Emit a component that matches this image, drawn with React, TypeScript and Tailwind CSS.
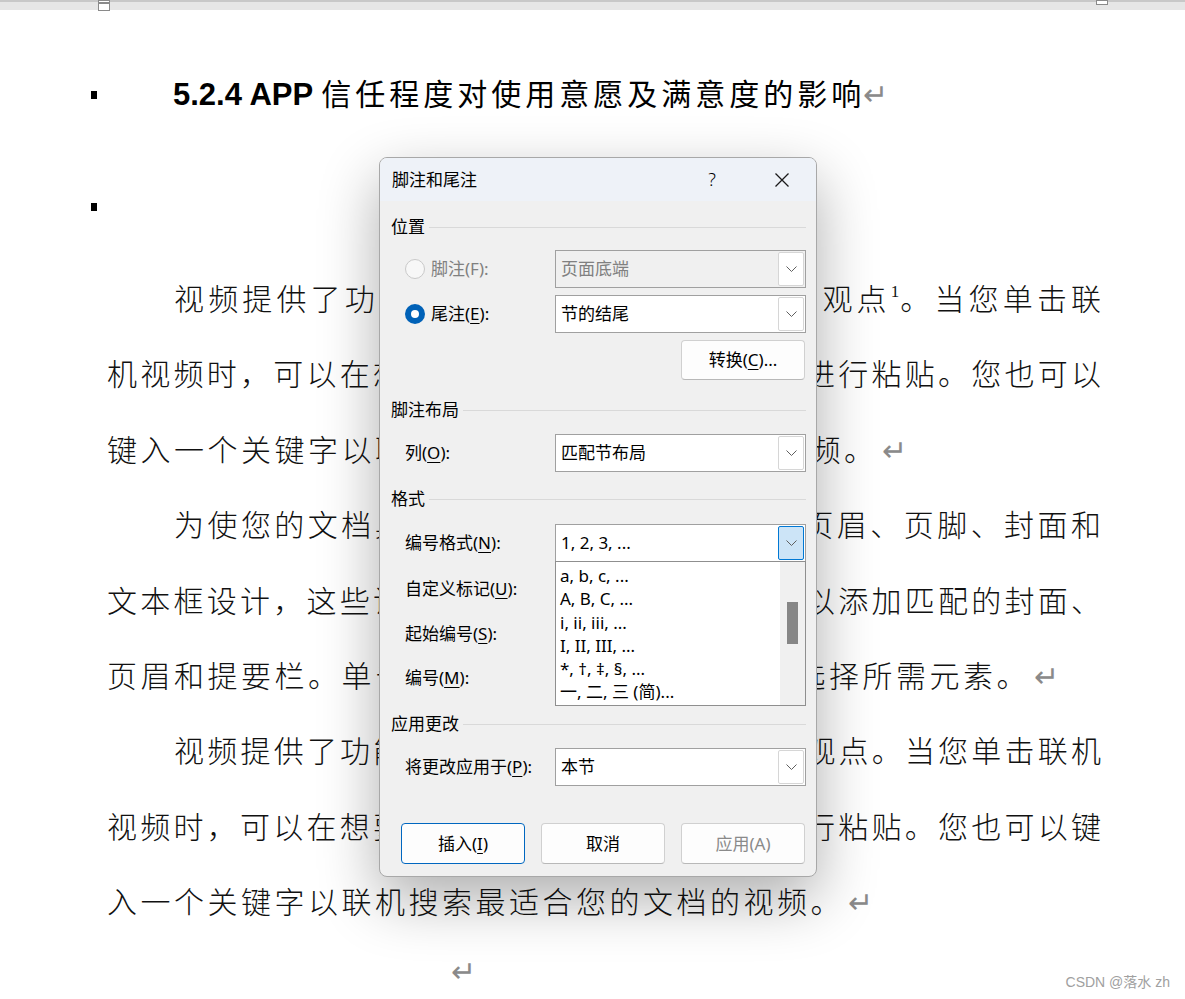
import React from "react";

const RET = ({ className }: { className?: string }) => (
  <span
    className={`inline-block align-baseline text-[#8a8a8a] font-['DejaVu_Sans',sans-serif] font-extralight text-[30px] leading-none tracking-normal ${className ?? "ml-[4px]"}`}
  >
    ↵
  </span>
);

function Line({ children, last, indent }: { children: React.ReactNode; last?: boolean; indent?: boolean }) {
  return (
    <div
      className={`h-[75.4px] leading-[75.4px] whitespace-nowrap overflow-visible ${
        last ? "text-left tracking-[3.5px]" : "text-justify [text-align-last:justify] tracking-[3px]"
      } ${indent ? "pl-[67px]" : ""}`}
    >
      {children}
    </div>
  );
}

function Chevron() {
  return (
    <svg width="11" height="6" viewBox="0 0 11 6">
      <path d="M0.5 0.5 L5.5 5.5 L10.5 0.5" stroke="#5f5f5f" strokeWidth="1" fill="none" />
    </svg>
  );
}

function Select({ value, disabled, active }: { value: string; disabled?: boolean; active?: boolean }) {
  return (
    <div
      className={`flex items-center w-[251px] h-[38px] border border-[#a0a0a0] ${
        disabled ? "bg-[#f0f0f0] text-[#808080]" : "bg-white text-black"
      }`}
    >
      <span className="pl-[5px] flex-1">{value}</span>
      <div
        className={`mr-[1px] w-[26px] h-[34px] flex items-center justify-center rounded-[2px] border ${
          active ? "bg-[#cce4f7] border-[#0078d4]" : "bg-white border-[#d6d6d6]"
        }`}
      >
        <Chevron />
      </div>
    </div>
  );
}

function Section({ title, className }: { title: string; className?: string }) {
  return (
    <div className={`flex items-center h-[20px] ${className ?? ""}`}>
      <span className="leading-[20px]">{title}</span>
      <div className="flex-1 h-px bg-[#d9d9d9] ml-[4px]" />
    </div>
  );
}

function U({ c }: { c: string }) {
  return <span className="underline underline-offset-[3px] decoration-1">{c}</span>;
}

function Btn({ children, primary, disabled }: { children: React.ReactNode; primary?: boolean; disabled?: boolean }) {
  return (
    <div
      className={`w-[124px] h-[41px] rounded-[4px] border flex items-center justify-center bg-[#fdfdfd] ${
        primary ? "border-[#0067c0]" : "border-[#d0d0d0] border-b-[#b8b8b8]"
      } ${disabled ? "text-[#8a8a8a]" : "text-black"}`}
    >
      {children}
    </div>
  );
}

export default function App() {
  return (
    <div className="relative w-[1185px] h-[999px] overflow-hidden bg-white">
      {/* ruler strip */}
      <div className="relative h-[10px] bg-[#e6e6e6] border-t-[2px] border-[#c8c8c8]">
        <div className="absolute left-[98px] top-[-2px] w-[12px] h-[3px] bg-white border border-[#8a8a8a]" />
        <div className="absolute left-[98px] top-[1px] w-[12px] h-[8px] bg-white border border-[#8a8a8a]" />
        <div className="absolute left-[1096px] top-[-2px] w-[12px] h-[5px] bg-white border border-[#8a8a8a]" />
      </div>

      {/* heading */}
      <div className="flex items-center h-[50px] mt-[60px]">
        <div className="ml-[91px] w-[6px] h-[8px] bg-black" />
        <div className="ml-[76px] leading-[50px] text-black whitespace-nowrap">
          <span className="text-[31px] font-bold font-['Liberation_Sans',sans-serif]">5.2.4 APP </span>
          <span className="text-[30px] tracking-[4px] font-normal font-['Noto_Sans_CJK_SC',sans-serif]">信任程度对使用意愿及满意度的影响</span>
          <RET className="-ml-[2px]" />
        </div>
      </div>

      {/* empty bullet heading */}
      <div className="flex items-center h-[50px] mt-[62px]">
        <div className="ml-[91px] w-[6px] h-[8px] bg-black" />
      </div>

      {/* body */}
      <div className="mt-[28px] ml-[107px] w-[997px] text-[30px] text-[#111] font-light font-['Noto_Sans_CJK_SC',sans-serif]">
        <Line indent>
          视频提供了功能强大的方法帮助您证明您的观点<span className="relative top-[-13px] text-[17px] leading-none tracking-normal font-['Liberation_Serif',serif]">1</span>。当您单击联
        </Line>
        <Line>机视频时，可以在想要添加的视频的嵌入代码中进行粘贴。您也可以</Line>
        <Line last>
          键入一个关键字以联机搜索最适合您的文档的视频。
          <RET />
        </Line>
        <Line indent>为使您的文档具有专业外观，Word 提供了页眉、页脚、封面和</Line>
        <Line>文本框设计，这些设计可互为补充。例如，您可以添加匹配的封面、</Line>
        <Line last>
          页眉和提要栏。单击“插入”，然后从不同库中选择所需元素。
          <RET />
        </Line>
        <Line indent>视频提供了功能强大的方法帮助您证明您的观点。当您单击联机</Line>
        <Line>视频时，可以在想要添加的视频的嵌入代码中进行粘贴。您也可以键</Line>
        <Line last>
          入一个关键字以联机搜索最适合您的文档的视频。
          <RET />
        </Line>
        <div className="h-[60px] leading-[60px] pl-[344px]">
          <RET className="ml-0" />
        </div>
      </div>

      {/* dialog */}
      <div className="absolute left-[379px] top-[157px] w-[438px] h-[720px] rounded-[8px] border border-[#a8a8a8] bg-[#f0f0f0] shadow-[0_22px_60px_rgba(0,0,0,0.32)] overflow-hidden text-[17px] text-black font-['Noto_Sans','Noto_Sans_CJK_SC',sans-serif]">
        {/* title bar */}
        <div className="flex items-center h-[43px] bg-[#eef2f8] pl-[12px] pr-[11px]">
          <span className="flex-1">脚注和尾注</span>
          <div className="w-[40px] text-center text-[18px] font-light">?</div>
          <div className="ml-[27px] w-[46px] flex items-center justify-center">
            <svg width="16" height="16" viewBox="0 0 16 16">
              <path d="M1.5 1.5 L14.5 14.5 M14.5 1.5 L1.5 14.5" stroke="#1a1a1a" strokeWidth="1.3" fill="none" />
            </svg>
          </div>
        </div>

        {/* body */}
        <div className="flex flex-col pl-[11px] pr-[10px]">
          <Section title="位置" className="mt-[16px]" />

          <div className="flex items-center h-[38px] mt-[13px]">
            <div className="w-[164px] flex items-center pl-[14px] text-[#808080]">
              <div className="w-[20px] h-[20px] rounded-full border border-[#c9c9c9] bg-[#f7f7f7]" />
              <span className="ml-[6px]">脚注(F):</span>
            </div>
            <Select value="页面底端" disabled />
          </div>

          <div className="flex items-center h-[38px] mt-[7px]">
            <div className="w-[164px] flex items-center pl-[14px]">
              <div className="w-[20px] h-[20px] rounded-full bg-[#0061b7] flex items-center justify-center">
                <div className="w-[8px] h-[8px] rounded-full bg-white" />
              </div>
              <span className="ml-[6px]">
                尾注(<U c="E" />):
              </span>
            </div>
            <Select value="节的结尾" />
          </div>

          <div className="flex justify-end mt-[7px] pr-[1px]">
            <div className="w-[124px] h-[40px] rounded-[4px] border border-[#d0d0d0] border-b-[#b8b8b8] bg-[#fdfdfd] flex items-center justify-center">
              <span>
                转换(<U c="C" />)...
              </span>
            </div>
          </div>

          <Section title="脚注布局" className="mt-[20px]" />

          <div className="flex items-center h-[38px] mt-[14px]">
            <div className="w-[164px] pl-[14px]">
              列(<U c="O" />):
            </div>
            <Select value="匹配节布局" />
          </div>

          <Section title="格式" className="mt-[17px]" />

          <div className="flex items-center h-[38px] mt-[15px]">
            <div className="w-[164px] pl-[14px]">
              编号格式(<U c="N" />):
            </div>
            <div className="relative">
              <Select value="1, 2, 3, ..." active />
              <div className="absolute z-10 left-0 top-[37px] w-[251px] h-[145px] border border-[#8f8f8f] bg-white flex">
                <div className="flex-1 pl-[4px] pt-[2px] leading-[23.3px] whitespace-nowrap overflow-hidden">
                  <div>a, b, c, ...</div>
                  <div>A, B, C, ...</div>
                  <div>i, ii, iii, ...</div>
                  <div>I, II, III, ...</div>
                  <div>*, †, ‡, §, ...</div>
                  <div>一, 二, 三 (简)...</div>
                </div>
                <div className="w-[25px] bg-[#f0f0f0] flex flex-col items-center">
                  <div className="mt-[40px] w-[11px] h-[42px] bg-[#868686]" />
                </div>
              </div>
            </div>
          </div>

          <div className="flex items-center h-[38px] mt-[8px]">
            <div className="w-[164px] pl-[14px]">
              自定义标记(<U c="U" />):
            </div>
          </div>
          <div className="flex items-center h-[38px] mt-[7px]">
            <div className="w-[164px] pl-[14px]">
              起始编号(<U c="S" />):
            </div>
          </div>
          <div className="flex items-center h-[38px] mt-[6px]">
            <div className="w-[164px] pl-[14px]">
              编号(<U c="M" />):
            </div>
          </div>

          <Section title="应用更改" className="mt-[17px]" />

          <div className="flex items-center h-[38px] mt-[14px]">
            <div className="w-[164px] pl-[14px] whitespace-nowrap">
              将更改应用于(<U c="P" />):
            </div>
            <Select value="本节" />
          </div>

          <div className="flex justify-end gap-[16px] mt-[37px] pr-[1px]">
            <Btn primary>
              <span>
                插入(<U c="I" />)
              </span>
            </Btn>
            <Btn>取消</Btn>
            <Btn disabled>应用(A)</Btn>
          </div>
        </div>
      </div>

      {/* watermark */}
      <div className="absolute right-[15px] top-[972px] text-[14px] text-[#a0a0a0] font-['Liberation_Sans','Noto_Sans_CJK_SC',sans-serif]">
        CSDN @落水 zh
      </div>
    </div>
  );
}
